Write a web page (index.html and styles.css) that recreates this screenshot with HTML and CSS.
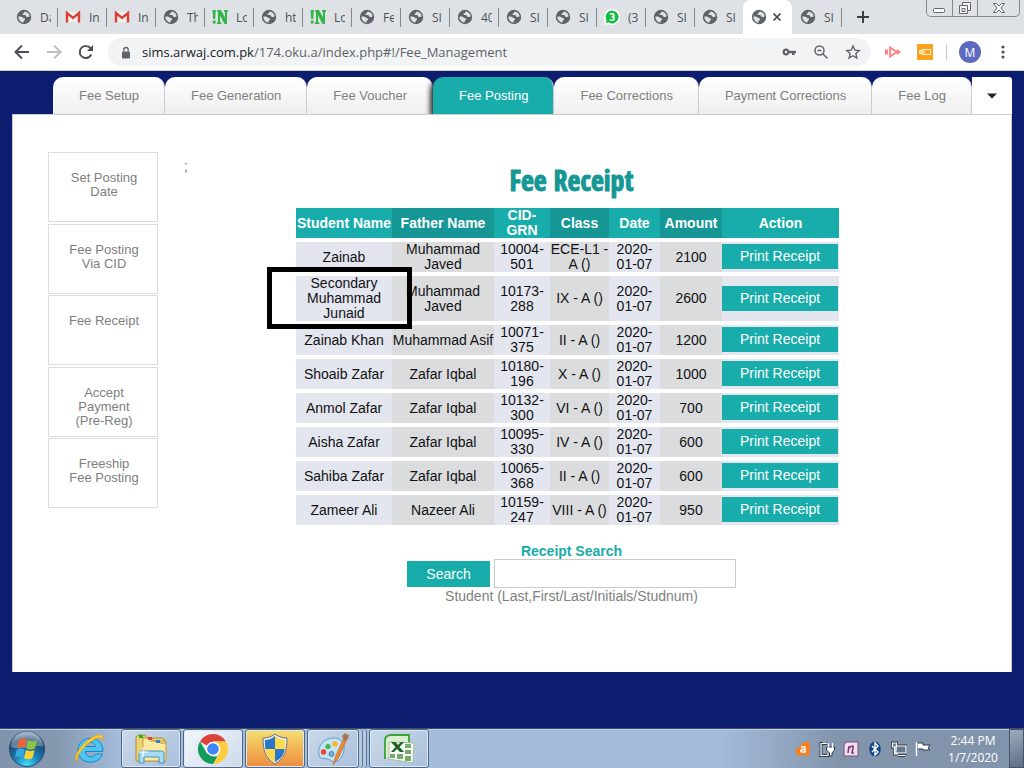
FILE: index.html
```html
<!DOCTYPE html>
<html lang="en">
<head>
<meta charset="utf-8">
<title>Fee Management</title>
<link rel="stylesheet" href="styles.css">
</head>
<body>
<svg class="defs" aria-hidden="true">
  <symbol id="globe" viewBox="0 0 16 16"><circle cx="8" cy="8" r="7.2" fill="#5f6368"/><path d="M2.400 7.600c1.800-.5 3.600 0 4.300 1 .8.9 2.400.5 2.400 1.700 0 1-1.400.9-1.500 2.200l-.2 1.200C4.500 13.300 2.300 10.800 2.400 7.600zM8.700 2.400c2.600.4 4.600 2.200 5 4.900-.7.8-1.800 1-2.900.6-1.200-.5-.7-1.600-1.900-1.800-1.300-.1-2.300.1-2.500-1 0-.9 1-.8 1.500-1.200.4-.4.2-1.200.8-1.500z" fill="#dee1e6"/></symbol>
  <symbol id="gmail" viewBox="0 0 16 16"><path d="M2 3h12v10H2z" fill="#f2f2f2"/><path d="M2 13.500V4l6 5 6-5v9.500" fill="none" stroke="#d93f35" stroke-width="2.400"/><path d="M4 12l3-3M12 12L9 9" stroke="#ddd"/></symbol>
  <symbol id="notice" viewBox="0 0 16 16"><path d="M.5 1h3.300L3.200 10H1.100zM.8 11.500h2.800V14.500H.8zM5 1h4l4 7.500V3l-1-.5V1h4v1.500l-1 .5v12h-2.500L8 6.500V13l1.300.5V15H5v-1.500l1-.5V3l-1-.5z" fill="#35b44a"/></symbol>
  <symbol id="chat" viewBox="0 0 16 16"><path d="M8 0a8 8 0 11-4 15L0 16l1-4A8 8 0 018 0z" fill="#fff"/><path d="M8 1.500a6.500 6.500 0 11-3.300 12.100L2 14l.5-2.800A6.500 6.500 0 018 1.500z" fill="#12bf43"/><path d="M6 5.500c1-1 4-1 4 .8 0 1.200-1.200 1.500-2.300 1.500 1.200 0 2.500.5 2.500 1.800 0 2-3.200 2-4.400.9" fill="none" stroke="#fff" stroke-width="1.600"/></symbol>
</svg>

<header class="browser">
  <div class="tabstrip">
    <button class="tab"><svg><use href="#globe"/></svg><span>Da</span></button>
    <button class="tab"><svg><use href="#gmail"/></svg><span>In</span></button>
    <button class="tab"><svg><use href="#gmail"/></svg><span>In</span></button>
    <button class="tab"><svg><use href="#globe"/></svg><span>Th</span></button>
    <button class="tab"><svg><use href="#notice"/></svg><span>Lo</span></button>
    <button class="tab"><svg><use href="#globe"/></svg><span>ht</span></button>
    <button class="tab"><svg><use href="#notice"/></svg><span>Lo</span></button>
    <button class="tab"><svg><use href="#globe"/></svg><span>Fe</span></button>
    <button class="tab"><svg><use href="#globe"/></svg><span>SI</span></button>
    <button class="tab"><svg><use href="#globe"/></svg><span>40</span></button>
    <button class="tab"><svg><use href="#globe"/></svg><span>SI</span></button>
    <button class="tab"><svg><use href="#globe"/></svg><span>SI</span></button>
    <button class="tab"><svg><use href="#chat"/></svg><span>(3</span></button>
    <button class="tab"><svg><use href="#globe"/></svg><span>SI</span></button>
    <button class="tab tab-last"><svg><use href="#globe"/></svg><span>SI</span></button>
    <button class="tab tab-active" aria-label="Fee Management"><svg><use href="#globe"/></svg><svg class="close" viewBox="0 0 10 10"><path d="M1.500 1.500l7 7m0-7l-7 7" stroke="#3c4043" stroke-width="1.700"/></svg></button>
    <button class="tab"><svg><use href="#globe"/></svg><span>SI</span></button>
    <button class="new-tab" aria-label="New tab"><svg viewBox="0 0 12 12"><path d="M6 0v12M0 6h12" stroke="#3c4043" stroke-width="2"/></svg></button>
    <div class="window-buttons">
      <button aria-label="Minimize"><svg viewBox="0 0 24 16"><rect x="6.500" y="8.500" width="11" height="4" rx="1" fill="#f5f6f8" stroke="#666a70"/></svg></button>
      <button aria-label="Restore"><svg viewBox="0 0 24 16"><path d="M9.500 2.500h8v8h-3v3h-8v-8h3z" fill="#f5f6f8" stroke="#666a70"/><path d="M9.500 5.500h5v5M9 8.500h3v3H9z" fill="none" stroke="#666a70"/></svg></button>
      <button class="wide" aria-label="Close"><svg viewBox="0 0 24 16"><path d="M6.500 3.500h3l2.500 2.500 2.500-2.500h3L14 8l3.500 4.500h-3L12 10l-2.500 2.500h-3L10 8z" fill="#f5f6f8" stroke="#666a70"/></svg></button>
    </div>
  </div>
  <div class="toolbar">
    <button aria-label="Back"><svg viewBox="0 0 16 16"><path d="M15 8H2M8 1.500L1.500 8 8 14.500" fill="none" stroke="#4d5156" stroke-width="2"/></svg></button>
    <button aria-label="Forward"><svg viewBox="0 0 16 16"><path d="M1 8h13M8 1.500L14.500 8 8 14.500" fill="none" stroke="#bdc1c6" stroke-width="2"/></svg></button>
    <button aria-label="Reload"><svg viewBox="0 0 16 16"><path d="M13.300 10.500A6 6 0 118 2c2 0 3.500.8 4.800 2.300" fill="none" stroke="#4d5156" stroke-width="2"/><path d="M15 1v6H9z" fill="#4d5156"/></svg></button>
    <div class="address">
      <svg class="lock" viewBox="0 0 10 12"><rect x="1" y="5" width="8" height="7" rx="1" fill="#5f6368"/><path d="M2.800 5V3.200a2.200 2.200 0 014.400 0V5" fill="none" stroke="#5f6368" stroke-width="1.300"/></svg>
      <span class="url"><b>sims.arwaj.com.pk</b>/174.oku.a/index.php#!/Fee_Management</span>
      <svg viewBox="0 0 16 16"><path d="M5 4.500a3.500 3.500 0 103.300 4.800H11V11h2.500V9.300H15V6.700H8.300A3.500 3.500 0 005 4.500zm0 2.300a1.200 1.200 0 110 2.400 1.200 1.200 0 010-2.400z" fill="#5f6368"/></svg>
      <svg viewBox="0 0 16 16"><circle cx="6.500" cy="6.500" r="4.500" fill="none" stroke="#5f6368" stroke-width="1.500"/><path d="M4.500 6.500h4M10 10l4.500 4.500" stroke="#5f6368" stroke-width="1.500"/></svg>
      <svg viewBox="0 0 16 16"><path d="M8 2l1.800 4.200 4.500.4-3.400 3 1 4.400L8 11.700 4.100 14l1-4.400-3.400-3 4.500-.4z" fill="none" stroke="#5f6368" stroke-width="1.400"/></svg>
    </div>
    <svg viewBox="0 0 16 16"><path d="M0 5.500h3v5H0zM12 5l4 3-4 3z" fill="#ff7f7f"/><path d="M5 3.500v9L12 8z" fill="#fff" stroke="#ff7f7f" stroke-width="1.800"/></svg>
    <svg viewBox="0 0 16 16"><path d="M0 0h16v16H0z" fill="#ffa31a"/><path d="M5 5.500h8.500v5H5zM2.500 6.500H5v3H2.500zM7 5.500v5M2 8h3" fill="none" stroke="#fff2d8"/></svg>
    <span class="divider"></span>
    <button class="avatar">M</button>
    <button class="more" aria-label="Menu"><svg viewBox="0 0 16 16"><g fill="#4d5156"><circle cx="8" cy="3" r="1.600"/><circle cx="8" cy="8" r="1.600"/><circle cx="8" cy="13" r="1.600"/></g></svg></button>
  </div>
</header>

<main class="page">
  <nav class="module-tabs">
    <a href="#">Fee Setup</a>
    <a href="#">Fee Generation</a>
    <a href="#">Fee Voucher</a>
    <a class="current" href="#">Fee Posting</a>
    <a href="#">Fee Corrections</a>
    <a href="#">Payment Corrections</a>
    <a href="#">Fee Log</a>
    <button class="overflow" aria-label="More modules"><svg viewBox="0 0 10 6"><path d="M0 .5h10L5 5.500z" fill="#222"/></svg></button>
  </nav>
  <div class="panel">
    <nav class="side-menu">
      <a href="#">Set Posting Date</a>
      <a href="#">Fee Posting Via CID</a>
      <a href="#">Fee Receipt</a>
      <a href="#">Accept Payment (Pre-Reg)</a>
      <a href="#">Freeship Fee Posting</a>
    </nav>
    <section class="content">
      <div class="heading"><span>;</span><h1>Fee Receipt</h1></div>
      <table class="receipts">
        <colgroup><col class="w-student"><col class="w-father"><col class="w-cid"><col class="w-class"><col class="w-date"><col class="w-amount"><col class="w-action"></colgroup>
        <thead><tr><th>Student Name</th><th>Father Name</th><th>CID-GRN</th><th>Class</th><th>Date</th><th>Amount</th><th>Action</th></tr></thead>
        <tbody>
          <tr><td>Zainab</td><td>Muhammad Javed</td><td>10004-501</td><td>ECE-L1 - A ()</td><td>2020-01-07</td><td>2100</td><td><button>Print Receipt</button></td></tr>
          <tr><td class="marked">Secondary Muhammad Junaid<span class="marker"></span></td><td>Muhammad Javed</td><td>10173-288</td><td>IX - A ()</td><td>2020-01-07</td><td>2600</td><td><button>Print Receipt</button></td></tr>
          <tr><td>Zainab Khan</td><td>Muhammad Asif</td><td>10071-375</td><td>II - A ()</td><td>2020-01-07</td><td>1200</td><td><button>Print Receipt</button></td></tr>
          <tr><td>Shoaib Zafar</td><td>Zafar Iqbal</td><td>10180-196</td><td>X - A ()</td><td>2020-01-07</td><td>1000</td><td><button>Print Receipt</button></td></tr>
          <tr><td>Anmol Zafar</td><td>Zafar Iqbal</td><td>10132-300</td><td>VI - A ()</td><td>2020-01-07</td><td>700</td><td><button>Print Receipt</button></td></tr>
          <tr><td>Aisha Zafar</td><td>Zafar Iqbal</td><td>10095-330</td><td>IV - A ()</td><td>2020-01-07</td><td>600</td><td><button>Print Receipt</button></td></tr>
          <tr><td>Sahiba Zafar</td><td>Zafar Iqbal</td><td>10065-368</td><td>II - A ()</td><td>2020-01-07</td><td>600</td><td><button>Print Receipt</button></td></tr>
          <tr><td>Zameer Ali</td><td>Nazeer Ali</td><td>10159-247</td><td>VIII - A ()</td><td>2020-01-07</td><td>950</td><td><button>Print Receipt</button></td></tr>
        </tbody>
      </table>
      <form class="search">
        <label for="query">Receipt Search</label>
        <div class="search-row"><button type="button">Search</button><input id="query" type="text" aria-describedby="hint"></div>
        <p id="hint">Student (Last,First/Last/Initials/Studnum)</p>
      </form>
    </section>
  </div>
</main>

<footer class="taskbar">
  <button class="start" aria-label="Start"><svg viewBox="0 0 38 38"><defs><radialGradient id="orb" cx=".5" cy=".95" r=".9"><stop offset="0" stop-color="#3fe0ff"/><stop offset=".4" stop-color="#1a7fb8"/><stop offset=".8" stop-color="#1d466d"/><stop offset="1" stop-color="#7c97b0"/></radialGradient></defs><circle cx="19" cy="19" r="17.500" fill="url(#orb)" stroke="#274b6c"/><path d="M3 17a16 16 0 0132 0c-9-4-20 4-32 0z" fill="#fff" opacity=".3"/><path d="M11 10c3-2 5-2 7.500-.5L17 18c-3-1.500-5-1.300-8 .2z" fill="#ef6332"/><path d="M20 10c3 1.800 6 1.700 9 0l-2 8.500c-3 1.500-5.500 1.500-8.500 0z" fill="#8cc63f"/><path d="M8.700 19.700c3-1.500 5-1.500 8 0l-2 8c-3-1.500-5-1.500-7.700 0z" fill="#36a8e0"/><path d="M18 20c3 1.500 5.500 1.500 8.500 0l-2 8c-3 1.700-5.500 1.500-8.500 0z" fill="#ffd02f"/></svg></button>
  <button class="ie" aria-label="Internet Explorer"><svg viewBox="0 0 34 34"><path d="M30 19.500H12.500c0 6 7.500 7 10 2.500H29.500C26 34 5 33 5 18 5 3 30 1 30 19.500zM12.500 14.500h10c-.5-5.500-9-5.500-10 0z" fill="#4fc4ef" stroke="#1887c9"/><path d="M5 30C-3 27 10 9 22 4c6-2.500 9-1 7 5 0-4-3-4-8-1.500C11 13 1 26 5 30z" fill="#ffcf2e" stroke="#dc9c12" stroke-width=".7"/></svg></button>
  <button class="task" aria-label="Windows Explorer"><svg viewBox="0 0 34 34"><path d="M2 5l2-2h7l2 3h16l2 3v20H2z" fill="#efd371" stroke="#a98c39"/><path d="M9 6h9l2 3h12v20H9z" fill="#ffe9a0" stroke="#bc9b45"/><path d="M16 9h8l2 2h6" fill="none" stroke="#b5913a"/><path d="M5 3h4v3H5z" fill="#18b818"/><path d="M14 5h4v3h-4z" fill="#dc4530"/><path d="M22 8h4v3h-4z" fill="#2d82d7"/><path d="M5 31V21q0-2 2-2h21q2 0 2 2v10h-5v-6H10v6z" fill="#a9dbf0" stroke="#4595be"/><path d="M9 15v10M4 20h10" stroke="#fff"/></svg></button>
  <button class="task task-open" aria-label="Google Chrome"><svg viewBox="0 0 34 34"><path d="M17 17L4 9.500A15 15 0 0130 9.500H17z" fill="#db4437"/><path d="M17 9.500h13A15 15 0 0117 32l6.500-11.200z" fill="#ffcd40"/><path d="M4 9.500l6.500 11.300L17 24.500h4.300L17 32A15 15 0 014 9.500z" fill="#0f9d58"/><circle cx="17" cy="17" r="7.200" fill="#fff"/><circle cx="17" cy="17" r="5.800" fill="#4285f4"/></svg></button>
  <button class="task task-alert" aria-label="Security prompt"><svg viewBox="0 0 34 34"><path d="M17 2c4 3 8 4 12 4 0 12-2 20-12 26C7 26 5 18 5 6c4 0 8-1 12-4z" fill="#e9eaea" stroke="#71767b"/><path d="M17 4v13H7.300C7 14 7 11 7 8c4 0 7-1.500 10-4zM17 17h9.700c-1 6-4 10-9.700 13z" fill="#2877c9"/><path d="M17 4c3 2.500 6 4 10 4 0 3 0 6-.3 9H17zM7.300 17H17v13c-6-3-8.700-7-9.700-13z" fill="#ffd84b"/></svg></button>
  <button class="task task-stack" aria-label="Paint"><svg viewBox="0 0 34 34"><path d="M18 6C8 6 1 14 3 23c1 5 6 3 9 4s6 5 11 1c7-6 8-22-5-22z" fill="#c5e3f4" stroke="#5f9ec6"/><circle cx="7.500" cy="20" r="2.700" fill="#e8463f"/><circle cx="12" cy="14.500" r="2.600" fill="#45b649"/><circle cx="19" cy="12" r="2.800" fill="#f9b833"/><circle cx="15.500" cy="22" r="2.500" fill="#78add0" stroke="#4486b4"/><path d="M17 33l3-10 7-15 3 1-7 16z" fill="#ee8a38" stroke="#ba641f" stroke-width=".6"/><path d="M28 9l-2-5 3-3 3 2 1-1-1 5-2 2z" fill="#a8764c"/></svg></button>
  <button class="task task-excel" aria-label="Excel"><svg viewBox="0 0 34 34"><path d="M3 27V9q0-6 6-6h18v9" fill="#d9eecf" stroke="#3ba233" stroke-width="1.800"/><path d="M7 10l25 1-1 20-24-4z" fill="#f6faf3" stroke="#a8bfa0"/><path d="M23 12h6v4h-6zM23 18h6v4h-6zM8 22h5v4H8zM15 22h6v5h-6zM23 24h6v5h-6z" fill="#77aa70"/><path d="M9 10h4.500l2.500 3 3-3h3l-4.500 5 4.500 5h-4l-3-3-3 3h-3l4.500-5z" fill="#1f6125"/></svg></button>
  <div class="tray">
    <svg viewBox="0 0 16 16"><path d="M8 2l5-2 2 5-1 8 1 2-7-1-6 1 0-4-2-3 3-1z" fill="#ff7e18"/><path d="M6 6h4v5H6.500Q5 10 6.500 8.500H10M10 11h1" fill="none" stroke="#fff" stroke-width="1.300"/></svg>
    <svg viewBox="0 0 16 16"><path d="M8 2.500H2v12h7V12M4 1h3" fill="none" stroke="#303c4a" stroke-width="3"/><path d="M8 2.500H2v12h7V12M4 1h3" fill="none" stroke="#fff" stroke-width="1.200"/><path d="M7.500 6h8v3l-2.500 3v3h-2.500v-3L7.500 9z" fill="#fff" stroke="#303c4a"/><path d="M9.500 2v5M13.500 2v5" stroke="#fff" stroke-width="1.200"/></svg>
    <svg viewBox="0 0 16 16"><path d="M3 1h12v14H1V4z" fill="#eee1ef" stroke="#84497f"/><path d="M5 12l1-7M6 7q5-4 4 0l-1 5h2" fill="none" stroke="#813b7b" stroke-width="1.600"/></svg>
    <svg viewBox="0 0 16 16"><ellipse cx="8" cy="8" rx="5.800" ry="7.500" fill="#12468b"/><path d="M5 5l6 6-3 3V2l3 3-6 6" fill="none" stroke="#fff" stroke-width="1.400"/></svg>
    <svg viewBox="0 0 16 16"><path d="M5 5h10v7H5zM7 14.500h7M1.500 2v4h4V2zM3.500 6v7H7" fill="#65798e" stroke="#303c4a" stroke-width="3"/><path d="M5 5h10v7H5zM7 14.500h7M1.500 2v4h4V2zM3.500 6v7H7" fill="#65798e" stroke="#fff" stroke-width="1.200"/></svg>
    <svg viewBox="0 0 16 16"><path d="M1.500 1v14M2 2h6v2h7l-2 3 2 2H8V8H2z" fill="#fff" stroke="#303c4a"/><path d="M1.500 1v14" stroke="#fff" stroke-width="1.500"/></svg>
  </div>
  <time class="clock">2:44 PM<br>1/7/2020</time>
  <button class="show-desktop" aria-label="Show desktop"></button>
</footer>
</body>
</html>
```

FILE: styles.css
```css
* { box-sizing: border-box; }
body {
  margin: 0;
  min-height: 100vh;
  display: flex;
  flex-direction: column;
  font: 14px/15px "Liberation Sans", Arial, sans-serif;
  color: #808080;
}
button { font: inherit; color: inherit; border: 0; padding: 0; background: none; }
a { color: inherit; text-decoration: none; }
svg { display: block; flex: none; }
.defs { display: none; }

/* Browser frame */
.browser {
  border-bottom: 1px solid #d0d3d8;
  font-family: "Open Sans", "Noto Sans", sans-serif;
  background: #fff;
}
.tabstrip {
  display: flex;
  height: 34px;
  padding-left: 8px;
  background: #dee1e6;
}
.tab {
  position: relative;
  flex: none;
  display: flex;
  align-items: center;
  gap: 8px;
  width: 49px;
  padding: 0 6px 0 8px;
  font-size: 12px;
  color: #4d5156;
}
.tab::after {
  content: "";
  position: absolute;
  right: -1px;
  top: 8px;
  width: 1px;
  height: 19px;
  background: #85898f;
}
.tab svg { width: 16px; height: 16px; }
.tab span {
  width: 11px;
  overflow: hidden;
  white-space: nowrap;
  text-align: left;
}
.tab-last::after, .tab-active::after { display: none; }
.tab-active { background: #fff; border-radius: 8px 8px 0 0; gap: 5px; }
.tab-active .close { width: 10px; height: 10px; }
.new-tab { margin-left: 16px; }
.new-tab svg { width: 12px; height: 12px; }
.window-buttons {
  display: flex;
  height: 17px;
  margin: 0 4px 0 auto;
  border: 1px solid #85898f;
  border-top: 0;
  border-radius: 0 0 5px 5px;
}
.window-buttons button { width: 25px; }
.window-buttons button + button { border-left: 1px solid #85898f; }
.window-buttons .wide { width: 42px; display: flex; justify-content: center; }
.window-buttons svg { width: 24px; height: 16px; }
.toolbar {
  display: flex;
  align-items: center;
  height: 36px;
  padding: 0 13px 0 14px;
  gap: 16px;
}
.toolbar svg { width: 16px; height: 16px; }
.address {
  flex: 1;
  display: flex;
  align-items: center;
  gap: 16px;
  height: 28px;
  margin: 0 -2px;
  padding: 0 10px 0 13px;
  border-radius: 14px;
  background: #f1f3f4;
}
.address .lock { width: 10px; height: 13px; }
.url {
  flex: 1;
  margin-left: -5px;
  font-size: 13px;
  line-height: 20px;
  color: #5f6368;
}
.url b { font-weight: 400; color: #202124; }
.divider { width: 1px; height: 16px; margin: 0 -4px 0 -3px; background: #c5c8cc; }
.avatar {
  width: 22px;
  height: 22px;
  border-radius: 50%;
  background: #5c6bc0;
  color: #fff;
  font-size: 12px;
}
.more { margin-left: -2px; }

/* Application */
.page {
  flex: 1;
  display: flex;
  flex-direction: column;
  padding: 6px 12px 56px;
  background: #0c1c6f;
}
.module-tabs {
  display: flex;
  padding-left: 41px;
  height: 37px;
  font-size: 13px;
}
.module-tabs a {
  display: flex;
  align-items: center;
  justify-content: center;
  padding: 0 25px 0 26px;
  border-right: 1px solid #ccc;
  border-radius: 10px 10px 0 0;
  background: linear-gradient(#fff, #efefef);
  white-space: nowrap;
}
.module-tabs .current {
  background: #18acaa;
  color: #fff;
  box-shadow: -3px 3px 5px #333;
  clip-path: inset(0 0 0 -8px);
}
.overflow {
  flex: 1;
  display: grid;
  place-items: center;
  background: #fff;
  border-radius: 0 3px 0 0;
}
.overflow svg { width: 10px; height: 6px; }
.panel {
  flex: 1;
  display: flex;
  align-items: flex-start;
  gap: 26px;
  padding: 37px 52px 24px 35px;
  border: 1px solid #ccc;
  border-bottom: 0;
  background: #fff;
}
.side-menu {
  flex: none;
  display: flex;
  flex-direction: column;
  justify-content: space-between;
  width: 110px;
  min-height: 356px;
  font-size: 13px;
  line-height: 14px;
  text-align: center;
}
.side-menu a {
  min-height: 70px;
  padding: 18px 16px 8px 18px;
  border: 1px solid #ddd;
}
.content {
  flex: 1;
  display: flex;
  flex-direction: column;
  align-items: center;
}
.heading {
  align-self: stretch;
  display: grid;
  grid-template-columns: 1fr auto 1fr;
  padding-top: 7px;
}
.heading h1 {
  margin: 6px 0 9px;
  font: bold 28px/30px Impact, "Liberation Sans Narrow", "Open Sans Condensed", "DejaVu Sans Condensed", sans-serif;
  color: #169795;
  -webkit-text-stroke: 1px #169795;
}
.receipts {
  width: 543px;
  margin-right: 8px;
  table-layout: fixed;
  border-spacing: 0 4px;
  text-align: center;
  color: #111;
}
.receipts th, .receipts td { height: 30px; padding: 0; }
.receipts th { background: #18acaa; color: #fff; }
.receipts td { background: #e3e6ef; }
.receipts th:nth-child(even) { background: #169795; }
.receipts td:nth-child(even) { background: #dadcde; }
.receipts td:last-child { padding-bottom: 1px; }
.w-student { width: 96px; }
.w-father { width: 102px; }
.w-cid { width: 56px; }
.w-class { width: 59px; }
.w-date { width: 51px; }
.w-amount { width: 62px; }
.w-action { width: 117px; }
.receipts button {
  display: block;
  width: 116px;
  height: 25px;
  background: #18acaa;
  color: #fff;
}
.marked { position: relative; }
.marker {
  position: absolute;
  z-index: 1;
  left: -29px;
  top: -9px;
  width: 145px;
  height: 62px;
  border: 5px solid #000;
}
.search {
  display: flex;
  flex-direction: column;
  align-items: center;
  margin-top: 14px;
  line-height: 16px;
}
.search label { font-weight: bold; color: #18acaa; }
.search-row { display: flex; align-items: center; gap: 4px; }
.search-row button { width: 83px; height: 26px; background: #18acaa; color: #fff; }
.search-row input { width: 242px; height: 29px; border: 1px solid #ccc; font: inherit; }
.search p { margin: 0; }

/* Windows taskbar */
.taskbar {
  display: flex;
  align-items: center;
  height: 40px;
  border-top: 1px solid #3c4e68;
  background: linear-gradient(90deg, #8193aa 0, #8799b1 60px, #a4bddb 120px, #a4bddb 70%, #8294ab 82%);
  box-shadow: inset 0 1px #c0cedf;
}
.start { margin-left: 8px; }
.start svg { width: 38px; height: 38px; }
.ie { margin: 0 14px 0 27px; }
.ie svg, .task svg { width: 34px; height: 34px; }
.task {
  display: grid;
  place-items: center;
  width: 60px;
  height: 39px;
  margin-right: 2px;
  border: 1px solid #506784;
  border-radius: 3px;
  background: linear-gradient(135deg, #cbd9ea, #aac0dc);
  box-shadow: inset 0 0 0 1px #dce8f5;
}
.task-open { background: linear-gradient(135deg, #f4f7fb, #cddaea); }
.task-alert { background: linear-gradient(#f4e070, #f3b457 50%, #ed8c3d); }
.task-stack {
  width: 52px;
  box-shadow: inset 0 0 0 1px #dce8f5, 3px 0 #b4c8e0, 4px 0 #607896, 7px 0 #b4c8e0, 8px 0 #607896;
}
.task-excel { margin-left: 8px; }
.tray { display: flex; gap: 8px; margin: 0 6px 0 auto; }
.tray svg { width: 16px; height: 16px; }
.clock {
  width: 72px;
  text-align: center;
  color: #fff;
  font: 12px/17px "Open Sans", "Noto Sans", sans-serif;
}
.show-desktop {
  width: 15px;
  height: 39px;
  border: 1px solid #45566c;
  background: linear-gradient(160deg, #9eabbc, #5c6d85);
}
```
